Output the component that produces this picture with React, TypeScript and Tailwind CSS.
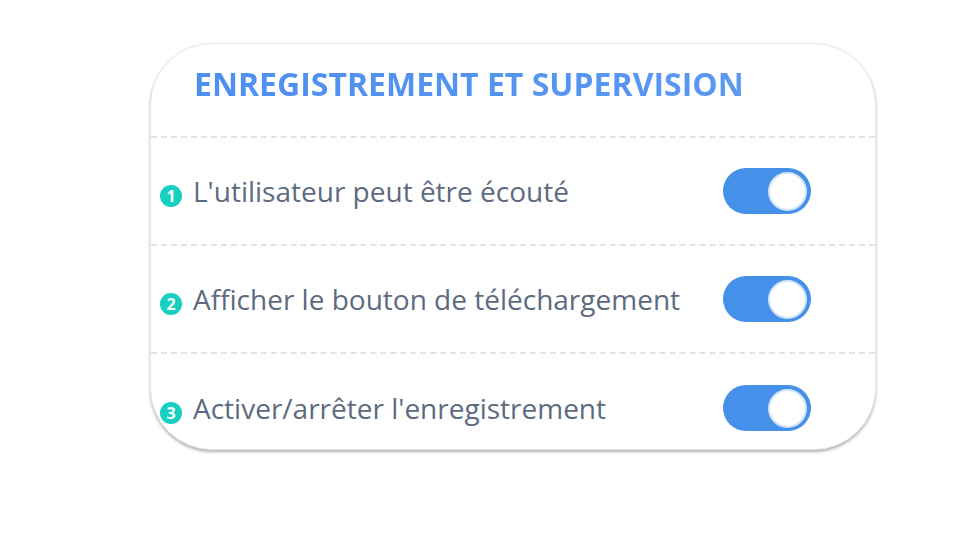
const rows = [
  { n: "1", label: "L'utilisateur peut être écouté" },
  { n: "2", label: "Afficher le bouton de téléchargement" },
  { n: "3", label: "Activer/arrêter l'enregistrement" },
];

const Toggle = () => (
  <div className="flex h-[46px] w-[88px] shrink-0 items-center justify-end rounded-full bg-[#4590e9] pr-[4px]">
    <div className="h-[39px] w-[39px] rounded-full border-2 border-[#d3e4fa] bg-white" />
  </div>
);

export default function App() {
  return (
    <div className="h-[540px] w-[960px] bg-white pt-[43px] pl-[150px] font-['Open_Sans',sans-serif]">
      <div className="flex h-[407px] w-[726px] flex-col overflow-hidden rounded-[62px] border border-[#e8e8e8] bg-white shadow-[0_2px_3px_rgba(0,0,0,0.3)]">
        <div className="flex h-[94px] shrink-0 items-center border-b-2 border-dashed border-[#e3e3e3] pb-[12px] pl-[43px]">
          <h1 className="bg-gradient-to-r from-[#4d8ff0] to-[#5a98f2] bg-clip-text text-[32px] font-bold text-transparent">
            ENREGISTREMENT ET SUPERVISION
          </h1>
        </div>
        {rows.map((r, i) => (
          <div
            key={r.n}
            className={
              i < rows.length - 1
                ? "flex h-[108px] shrink-0 items-center border-b-2 border-dashed border-[#e3e3e3] pl-[9px] pr-[64px]"
                : "flex h-[108px] shrink-0 items-center pl-[9px] pr-[64px]"
            }
          >
            <span className="relative top-[5px] mr-[11px] flex h-[22px] w-[22px] shrink-0 items-center justify-center rounded-full bg-[#17d0c1] text-[16px] font-bold leading-none text-white">
              {r.n}
            </span>
            <span className="flex-1 text-[28px] text-[#5d6b80]">{r.label}</span>
            <Toggle />
          </div>
        ))}
      </div>
    </div>
  );
}
